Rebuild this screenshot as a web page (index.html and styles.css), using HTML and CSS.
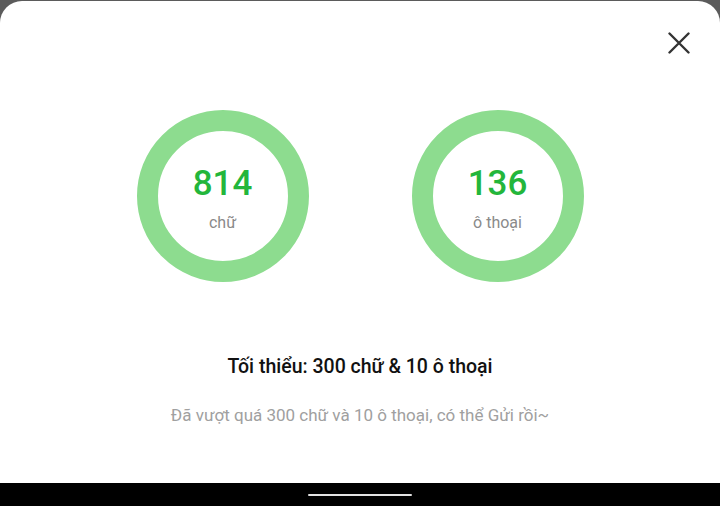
FILE: index.html
```html
<!DOCTYPE html>
<html lang="vi">
<head>
<meta charset="utf-8">
<link rel="stylesheet" href="styles.css">
</head>
<body>
<div class="screen">
  <div class="sheet">
    <div class="header">
      <button class="close" aria-label="Đóng">
        <svg width="22" height="22" viewBox="0 0 22 22"><path d="M1.5 1.5 L20.5 20.5 M20.5 1.5 L1.5 20.5" stroke="#333" stroke-width="2.4" stroke-linecap="round" fill="none"/></svg>
      </button>
    </div>
    <div class="rings">
      <div class="ring">
        <div class="num">814</div>
        <div class="unit">chữ</div>
      </div>
      <div class="ring">
        <div class="num">136</div>
        <div class="unit">ô thoại</div>
      </div>
    </div>
    <div class="title">Tối thiểu: 300 chữ &amp; 10 ô thoại</div>
    <div class="sub">Đã vượt quá 300 chữ và 10 ô thoại, có thể Gửi rồi~</div>
  </div>
  <div class="navbar"><div class="home"></div></div>
</div>
</body>
</html>
```
FILE: styles.css
```css
html, body {
  margin: 0;
  padding: 0;
}
body {
  background: #5b5b5b;
  font-family: Roboto, "Noto Sans", sans-serif;
  width: 720px;
  height: 506px;
  overflow: hidden;
}
.screen {
  display: flex;
  flex-direction: column;
  height: 506px;
  padding-top: 1px;
  box-sizing: border-box;
}
.sheet {
  flex: 1;
  background: #fff;
  border-radius: 22px 22px 0 0;
  padding-top: 31px;
  display: flex;
  flex-direction: column;
}
.header {
  display: flex;
  justify-content: flex-end;
  padding-right: 30px;
  height: 22px;
}
.close {
  border: 0;
  background: none;
  padding: 0;
  width: 22px;
  height: 22px;
  display: block;
}
.close svg { display: block; }
.rings {
  margin-top: 56px;
  display: flex;
  justify-content: center;
  gap: 103px;
}
.ring {
  width: 172px;
  height: 172px;
  box-sizing: border-box;
  border: 21px solid #8ddc8f;
  border-radius: 50%;
  display: flex;
  flex-direction: column;
  align-items: center;
  padding-top: 33px;
}
.num {
  font-size: 35px;
  line-height: 40px;
  font-weight: 500;
  color: #23b63b;
}
.unit {
  margin-top: 9px;
  font-size: 16px;
  line-height: 20px;
  color: #8a8a8a;
}
.title {
  margin-top: 73px;
  text-align: center;
  font-size: 19.5px;
  line-height: 24px;
  font-weight: 500;
  color: #111;
}
.sub {
  margin-top: 26px;
  text-align: center;
  font-size: 17px;
  line-height: 20px;
  color: #a0a0a0;
}
.navbar {
  height: 23px;
  background: #000;
  display: flex;
  justify-content: center;
  align-items: flex-start;
}
.home {
  margin-top: 11px;
  width: 104px;
  height: 2px;
  background: #e2e2e2;
  border-radius: 1px;
}
```
